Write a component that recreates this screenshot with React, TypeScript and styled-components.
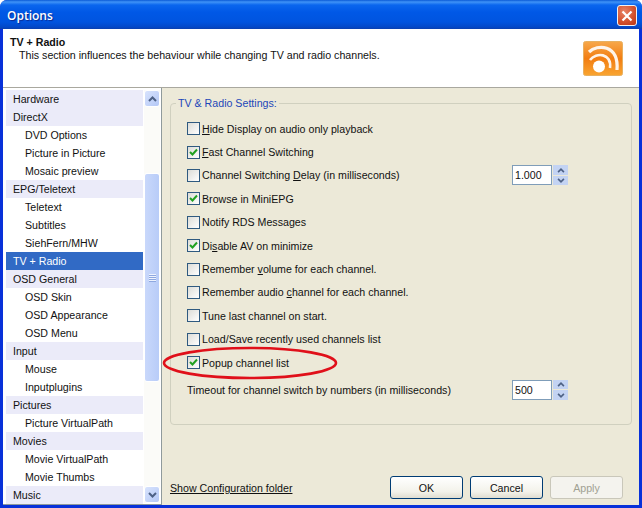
import React from "react";
import styled, { createGlobalStyle } from "styled-components";

const GlobalStyle = createGlobalStyle`
  html, body {
    margin: 0;
    padding: 0;
    background: #fff;
  }
  body {
    font-family: "Liberation Sans", Arial, sans-serif;
    font-size: 10.65px;
    color: #111;
  }
`;

const Window = styled.div`
  position: relative;
  width: 642px;
  height: 508px;
  box-sizing: border-box;
  display: flex;
  flex-direction: column;
  overflow: hidden;
  border-radius: 7px 7px 0 0;
  background: #0831d9;
  padding: 0 3px 3px 3px;
`;

const TitleBar = styled.div`
  flex: 0 0 29px;
  box-sizing: border-box;
  margin: 0 -3px;
  padding: 2px 5px 0 7px;
  display: flex;
  align-items: center;
  justify-content: space-between;
  background: linear-gradient(
    180deg,
    #0a5ad6 0,
    #3f93f7 2px,
    #0a66ee 5px,
    #0058e6 12px,
    #0054df 22px,
    #0348c8 27px,
    #0a3fae 29px
  );
`;

const Title = styled.span`
  color: #fff;
  font-family: "Open Sans", "Liberation Sans", sans-serif;
  font-size: 12px;
  font-weight: 600;
  text-shadow: 1px 1px 1px #0a2a90;
`;

const CloseButton = styled.div`
  width: 20px;
  height: 21px;
  box-sizing: border-box;
  border: 1px solid #f2f2f2;
  border-radius: 3px;
  background: radial-gradient(circle at 35% 30%, #e88468, #d4532f 55%, #b93414);
  display: flex;
  align-items: center;
  justify-content: center;
`;

const Header = styled.div`
  flex: 0 0 59px;
  box-sizing: border-box;
  background: #fff;
  padding: 6px 16px 0 7px;
  display: flex;
  justify-content: space-between;
  border-bottom: 1px solid #a9a89f;
`;

const HeaderText = styled.div`
  display: flex;
  flex-direction: column;
`;

const HeaderTitle = styled.div`
  font-weight: 700;
  line-height: 14px;
`;

const HeaderSub = styled.div`
  padding-left: 9px;
  line-height: 13px;
`;

const IconSlot = styled.div`
  padding-top: 6px;
`;

const Main = styled.div`
  flex: 1;
  display: flex;
  min-height: 0;
  background: #ece9d8;
`;

const ListBox = styled.div`
  flex: 0 0 159px;
  box-sizing: border-box;
  display: flex;
  background: #fff;
  border-right: 1px solid #8f9a9c;
  border-bottom: 1px solid #8f9a9c;
  padding: 2px 1px 1px 3px;
`;

const List = styled.div`
  flex: 1;
  display: flex;
  flex-direction: column;
`;

const Item = styled.div<{ $kind: "group" | "child" | "selected" }>`
  height: 18px;
  flex: 0 0 18px;
  line-height: 18px;
  white-space: nowrap;
  padding-left: ${(p) => (p.$kind === "child" ? 19 : 7)}px;
  background: ${(p) =>
    p.$kind === "group" ? "#ebebf9" : p.$kind === "selected" ? "#316ac5" : "#fff"};
  color: ${(p) => (p.$kind === "selected" ? "#fff" : "#111")};
`;

const Scrollbar = styled.div`
  flex: 0 0 16px;
  display: flex;
  flex-direction: column;
  margin-left: 1px;
  background: #fbfbf8;
`;

const ScrollButton = styled.div`
  flex: 0 0 17px;
  box-sizing: border-box;
  border: 1px solid #fff;
  border-radius: 3px;
  background: linear-gradient(135deg, #d8e3fd, #b4c8f6);
  display: flex;
  align-items: center;
  justify-content: center;
`;

const ScrollTrack = styled.div`
  flex: 1;
  padding-top: 66px;
`;

const ScrollThumb = styled.div`
  height: 209px;
  box-sizing: border-box;
  border: 1px solid #fff;
  border-radius: 3px;
  background: linear-gradient(90deg, #c9d8fb, #b8ccf8);
  display: flex;
  align-items: center;
  justify-content: center;
`;

const Grip = styled.div`
  width: 7px;
  height: 8px;
  background: repeating-linear-gradient(180deg, #eef3fe 0 1px, #8ea8e0 1px 2px);
`;

const Panel = styled.div`
  flex: 1;
  display: flex;
  flex-direction: column;
  padding: 8px 7px 6px 8px;
  min-width: 0;
`;

const Group = styled.fieldset`
  margin: 0;
  flex: 0 0 329px;
  box-sizing: border-box;
  border: 1px solid #d0d0bf;
  border-radius: 4px;
  padding: 7px 0 0 16px;
  min-width: 0;
`;

const Legend = styled.legend`
  color: #1c47b8;
  padding: 0 2px;
  margin-left: -11px;
  line-height: 14px;
`;

const Row = styled.div<{ $gap?: number }>`
  height: 23.4px;
  margin-top: ${(p) => p.$gap ?? 0}px;
  display: flex;
  align-items: center;
  white-space: nowrap;
`;

const CheckBox = styled.div`
  flex: 0 0 13px;
  height: 13px;
  box-sizing: border-box;
  margin-right: 2px;
  border: 1px solid #2f5a80;
  background: linear-gradient(135deg, #dcdcd7, #fff);
  display: flex;
  align-items: center;
  justify-content: center;
`;

const Label = styled.span`
  flex: 1;
`;

const SpinWrap = styled.div`
  display: flex;
  align-items: center;
  gap: 1px;
  margin-right: 63px;
`;

const SpinInput = styled.div`
  width: 40px;
  height: 20px;
  box-sizing: border-box;
  border: 1px solid #7f9db9;
  background: #fff;
  padding-left: 2px;
  line-height: 18px;
`;

const SpinButtons = styled.div`
  display: flex;
  flex-direction: column;
  gap: 1px;
  width: 15px;
  height: 20px;
`;

const SpinButton = styled.div`
  flex: 1;
  background: #c3d3f3;
  display: flex;
  align-items: center;
  justify-content: center;
`;

const Footer = styled.div`
  margin-top: auto;
  display: flex;
  align-items: flex-end;
  justify-content: space-between;
  padding-right: 9px;
`;

const ConfigLink = styled.span`
  text-decoration: underline;
  line-height: 14px;
  padding-bottom: 4px;
`;

const Buttons = styled.div`
  display: flex;
  gap: 7px;
`;

const Btn = styled.div<{ $disabled?: boolean }>`
  width: 73px;
  height: 23px;
  box-sizing: border-box;
  border: 1px solid ${(p) => (p.$disabled ? "#c9c7ba" : "#003c74")};
  border-radius: 3px;
  background: ${(p) =>
    p.$disabled ? "#f4f3ee" : "linear-gradient(180deg, #fff, #f3f2ea 70%, #e0ddd0)"};
  color: ${(p) => (p.$disabled ? "#a1a192" : "#111")};
  display: flex;
  align-items: center;
  justify-content: center;
`;

const Circle = styled.svg`
  position: absolute;
  left: 161px;
  top: 345px;
  pointer-events: none;
`;

const items: [string, "group" | "child" | "selected"][] = [
  ["Hardware", "group"],
  ["DirectX", "group"],
  ["DVD Options", "child"],
  ["Picture in Picture", "child"],
  ["Mosaic preview", "child"],
  ["EPG/Teletext", "group"],
  ["Teletext", "child"],
  ["Subtitles", "child"],
  ["SiehFern/MHW", "child"],
  ["TV + Radio", "selected"],
  ["OSD General", "group"],
  ["OSD Skin", "child"],
  ["OSD Appearance", "child"],
  ["OSD Menu", "child"],
  ["Input", "group"],
  ["Mouse", "child"],
  ["Inputplugins", "child"],
  ["Pictures", "group"],
  ["Picture VirtualPath", "child"],
  ["Movies", "group"],
  ["Movie VirtualPath", "child"],
  ["Movie Thumbs", "child"],
  ["Music", "group"],
];

const Chevron = ({ up, size = 9 }: { up?: boolean; size?: number }) => (
  <svg width={size} height={size - 3} viewBox="0 0 9 6">
    <path
      d={up ? "M1 5 L4.5 1.5 L8 5" : "M1 1 L4.5 4.5 L8 1"}
      fill="none"
      stroke="#4d6185"
      strokeWidth="2"
    />
  </svg>
);

const Check = () => (
  <svg width="9" height="9" viewBox="0 0 9 9">
    <path d="M1 4 L3.5 6.5 L8 1.5" fill="none" stroke="#21a121" strokeWidth="2" />
  </svg>
);

const Box = ({ checked }: { checked?: boolean }) => (
  <CheckBox>{checked && <Check />}</CheckBox>
);

const Spin = ({ value }: { value: string }) => (
  <SpinWrap>
    <SpinInput>{value}</SpinInput>
    <SpinButtons>
      <SpinButton>
        <Chevron up size={8} />
      </SpinButton>
      <SpinButton>
        <Chevron size={8} />
      </SpinButton>
    </SpinButtons>
  </SpinWrap>
);

const RssIcon = () => (
  <svg width="40" height="35" viewBox="0 0 40 35">
    <defs>
      <linearGradient id="rss" x1="0" y1="0" x2="0" y2="1">
        <stop offset="0" stopColor="#f7a84a" />
        <stop offset="0.5" stopColor="#f27d12" />
        <stop offset="1" stopColor="#f9a531" />
      </linearGradient>
    </defs>
    <rect x="0.5" y="0.5" width="39" height="34" rx="2" fill="url(#rss)" stroke="#e8b060" />
    <circle cx="16" cy="25.5" r="6" fill="#fff" />
    <path d="M7 19 C13 11 29 12 27 27" fill="none" stroke="#fff" strokeWidth="2.6" opacity="0.9" />
    <path d="M6 11 C14 3 36 3 34 29" fill="none" stroke="#fff" strokeWidth="3.2" opacity="0.9" />
  </svg>
);

export default function App() {
  return (
    <>
      <GlobalStyle />
      <Window>
        <TitleBar>
          <Title>Options</Title>
          <CloseButton>
            <svg width="12" height="12" viewBox="0 0 12 12">
              <path d="M1.5 1.5 L10.5 10.5 M10.5 1.5 L1.5 10.5" stroke="#fff" strokeWidth="2.2" />
            </svg>
          </CloseButton>
        </TitleBar>
        <Header>
          <HeaderText>
            <HeaderTitle>TV + Radio</HeaderTitle>
            <HeaderSub>
              This section influences the behaviour while changing TV and radio channels.
            </HeaderSub>
          </HeaderText>
          <IconSlot>
            <RssIcon />
          </IconSlot>
        </Header>
        <Main>
          <ListBox>
            <List>
              {items.map(([name, kind]) => (
                <Item key={name} $kind={kind}>
                  {name}
                </Item>
              ))}
            </List>
            <Scrollbar>
              <ScrollButton>
                <Chevron up />
              </ScrollButton>
              <ScrollTrack>
                <ScrollThumb>
                  <Grip />
                </ScrollThumb>
              </ScrollTrack>
              <ScrollButton>
                <Chevron />
              </ScrollButton>
            </Scrollbar>
          </ListBox>
          <Panel>
            <Group>
              <Legend>TV &amp; Radio Settings:</Legend>
              <Row>
                <Box />
                <Label>
                  <u>H</u>ide Display on audio only playback
                </Label>
              </Row>
              <Row>
                <Box checked />
                <Label>
                  <u>F</u>ast Channel Switching
                </Label>
              </Row>
              <Row>
                <Box />
                <Label>
                  Channel Switching <u>D</u>elay (in milliseconds)
                </Label>
                <Spin value="1.000" />
              </Row>
              <Row>
                <Box checked />
                <Label>Browse in MiniEPG</Label>
              </Row>
              <Row>
                <Box />
                <Label>Notify RDS Messages</Label>
              </Row>
              <Row>
                <Box checked />
                <Label>
                  Di<u>s</u>able AV on minimize
                </Label>
              </Row>
              <Row>
                <Box />
                <Label>
                  Remember <u>v</u>olume for each channel.
                </Label>
              </Row>
              <Row>
                <Box />
                <Label>
                  Remember audio <u>c</u>hannel for each channel.
                </Label>
              </Row>
              <Row>
                <Box />
                <Label>Tune last channel on start.</Label>
              </Row>
              <Row>
                <Box />
                <Label>Load/Save recently used channels list</Label>
              </Row>
              <Row>
                <Box checked />
                <Label>Popup channel list</Label>
              </Row>
              <Row $gap={4}>
                <Label>Timeout for channel switch by numbers (in milliseconds)</Label>
                <Spin value="500" />
              </Row>
            </Group>
            <Footer>
              <ConfigLink>Show Configuration folder</ConfigLink>
              <Buttons>
                <Btn>OK</Btn>
                <Btn>Cancel</Btn>
                <Btn $disabled>Apply</Btn>
              </Buttons>
            </Footer>
          </Panel>
        </Main>
        <Circle width="180" height="36" viewBox="0 0 180 36">
          <ellipse cx="89" cy="18" rx="86" ry="15" fill="none" stroke="#e0101a" strokeWidth="2.6" />
        </Circle>
      </Window>
    </>
  );
}
